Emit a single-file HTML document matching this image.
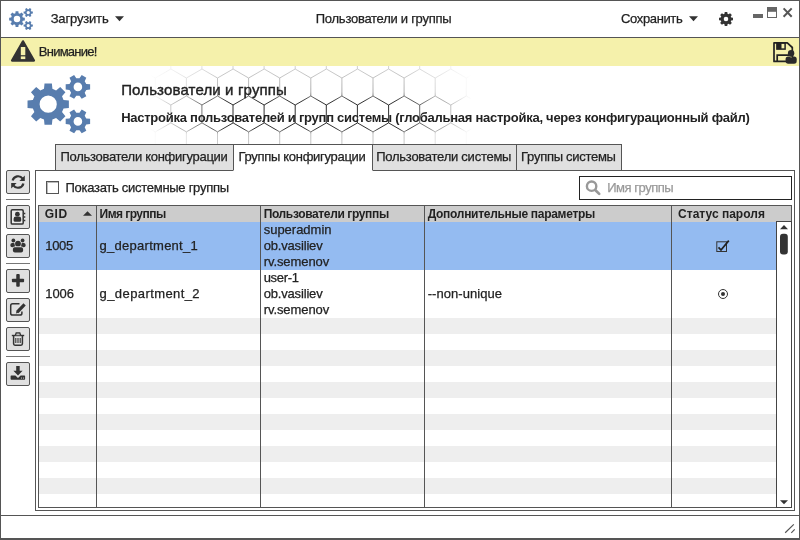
<!DOCTYPE html>
<html lang="ru">
<head>
<meta charset="utf-8">
<title>Пользователи и группы</title>
<style>
html,body{margin:0;padding:0;}
body{width:800px;height:540px;position:relative;overflow:hidden;background:#fff;
 font-family:"Liberation Sans",sans-serif;font-size:13px;color:#222;}
.a{position:absolute;}
.t{position:absolute;white-space:pre;will-change:opacity;opacity:0.999;line-height:16px;height:16px;color:#222;-webkit-text-stroke-width:0.25px;}
.ln{position:absolute;background:#555;}
.btn{position:absolute;left:6px;width:22px;height:22px;border:1px solid #555;border-radius:2px;background:#e0e0e0;}
.sep{position:absolute;left:6px;width:24px;height:1px;background:#777;}
.tab{position:absolute;top:144px;height:25px;border:1px solid #555;background:#e0e0e0;box-sizing:content-box;}
.stripe{position:absolute;left:39px;width:737px;height:16px;background:#eee;}
svg{position:absolute;overflow:visible;}
</style>
</head>
<body>
<!-- hex background -->
<svg width="800" height="540" viewBox="0 0 800 540" style="left:0;top:0;">
<defs>
<linearGradient id="hgx" gradientUnits="userSpaceOnUse" x1="140" y1="0" x2="480" y2="0"><stop offset="0.029" stop-color="#fff" stop-opacity="0"/><stop offset="0.162" stop-color="#fff" stop-opacity="0.55"/><stop offset="0.250" stop-color="#fff" stop-opacity="1"/><stop offset="0.765" stop-color="#fff" stop-opacity="1"/><stop offset="0.882" stop-color="#fff" stop-opacity="0.45"/><stop offset="0.976" stop-color="#fff" stop-opacity="0"/></linearGradient>
<linearGradient id="hgy" gradientUnits="userSpaceOnUse" x1="0" y1="60" x2="0" y2="175"><stop offset="0.052" stop-color="#fff" stop-opacity="0.22"/><stop offset="0.278" stop-color="#fff" stop-opacity="0.4"/><stop offset="0.357" stop-color="#fff" stop-opacity="1"/><stop offset="0.600" stop-color="#fff" stop-opacity="1"/><stop offset="0.643" stop-color="#fff" stop-opacity="0.3"/><stop offset="0.957" stop-color="#fff" stop-opacity="0.22"/></linearGradient>
<mask id="hmx" maskUnits="userSpaceOnUse" x="140" y="60" width="340" height="115"><rect x="140" y="60" width="340" height="115" fill="url(#hgx)"/></mask>
<mask id="hmy" maskUnits="userSpaceOnUse" x="140" y="60" width="340" height="115"><rect x="140" y="60" width="340" height="115" fill="url(#hgy)"/></mask>
<clipPath id="hc"><rect x="140" y="66" width="340" height="104"/></clipPath>
</defs>
<g clip-path="url(#hc)"><g mask="url(#hmy)"><path d="M124.2,42.1L124.2,24.2L139.8,15.2L155.3,24.2 M155.3,42.1L155.3,24.2L170.9,15.2L186.4,24.2 M186.4,42.1L186.4,24.2L202.0,15.2L217.5,24.2 M217.5,42.1L217.5,24.2L233.1,15.2L248.6,24.2 M248.6,42.1L248.6,24.2L264.2,15.2L279.7,24.2 M279.7,42.1L279.7,24.2L295.2,15.2L310.8,24.2 M310.8,42.1L310.8,24.2L326.4,15.2L341.9,24.2 M341.9,42.1L341.9,24.2L357.5,15.2L373.0,24.2 M373.0,42.1L373.0,24.2L388.6,15.2L404.1,24.2 M404.1,42.1L404.1,24.2L419.7,15.2L435.2,24.2 M435.2,42.1L435.2,24.2L450.8,15.2L466.3,24.2 M466.3,42.1L466.3,24.2L481.9,15.2L497.4,24.2 M108.6,69.0L108.6,51.1L124.2,42.1L139.8,51.1 M139.8,69.0L139.8,51.1L155.3,42.1L170.9,51.1 M170.8,69.0L170.8,51.1L186.4,42.1L202.0,51.1 M201.9,69.0L201.9,51.1L217.5,42.1L233.1,51.1 M233.0,69.0L233.0,51.1L248.6,42.1L264.1,51.1 M264.1,69.0L264.1,51.1L279.7,42.1L295.2,51.1 M295.2,69.0L295.2,51.1L310.8,42.1L326.4,51.1 M326.3,69.0L326.3,51.1L341.9,42.1L357.4,51.1 M357.4,69.0L357.4,51.1L373.0,42.1L388.6,51.1 M388.6,69.0L388.6,51.1L404.1,42.1L419.7,51.1 M419.7,69.0L419.7,51.1L435.2,42.1L450.8,51.1 M450.8,69.0L450.8,51.1L466.3,42.1L481.9,51.1 M481.9,69.0L481.9,51.1L497.4,42.1L513.0,51.1 M124.2,96.0L124.2,78.0L139.8,69.0L155.3,78.0 M155.3,96.0L155.3,78.0L170.9,69.0L186.4,78.0 M186.4,96.0L186.4,78.0L202.0,69.0L217.5,78.0 M217.5,96.0L217.5,78.0L233.1,69.0L248.6,78.0 M248.6,96.0L248.6,78.0L264.2,69.0L279.7,78.0 M279.7,96.0L279.7,78.0L295.2,69.0L310.8,78.0 M310.8,96.0L310.8,78.0L326.4,69.0L341.9,78.0 M341.9,96.0L341.9,78.0L357.5,69.0L373.0,78.0 M373.0,96.0L373.0,78.0L388.6,69.0L404.1,78.0 M404.1,96.0L404.1,78.0L419.7,69.0L435.2,78.0 M435.2,96.0L435.2,78.0L450.8,69.0L466.3,78.0 M466.3,96.0L466.3,78.0L481.9,69.0L497.4,78.0 M108.6,122.9L108.6,105.0L124.2,96.0L139.8,105.0 M139.8,122.9L139.8,105.0L155.3,96.0L170.9,105.0 M170.8,122.9L170.8,105.0L186.4,96.0L202.0,105.0 M201.9,122.9L201.9,105.0L217.5,96.0L233.1,105.0 M233.0,122.9L233.0,105.0L248.6,96.0L264.1,105.0 M264.1,122.9L264.1,105.0L279.7,96.0L295.2,105.0 M295.2,122.9L295.2,105.0L310.8,96.0L326.4,105.0 M326.3,122.9L326.3,105.0L341.9,96.0L357.4,105.0 M357.4,122.9L357.4,105.0L373.0,96.0L388.6,105.0 M388.6,122.9L388.6,105.0L404.1,96.0L419.7,105.0 M419.7,122.9L419.7,105.0L435.2,96.0L450.8,105.0 M450.8,122.9L450.8,105.0L466.3,96.0L481.9,105.0 M481.9,122.9L481.9,105.0L497.4,96.0L513.0,105.0 M124.2,149.8L124.2,131.9L139.8,122.9L155.3,131.9 M155.3,149.8L155.3,131.9L170.9,122.9L186.4,131.9 M186.4,149.8L186.4,131.9L202.0,122.9L217.5,131.9 M217.5,149.8L217.5,131.9L233.1,122.9L248.6,131.9 M248.6,149.8L248.6,131.9L264.2,122.9L279.7,131.9 M279.7,149.8L279.7,131.9L295.2,122.9L310.8,131.9 M310.8,149.8L310.8,131.9L326.4,122.9L341.9,131.9 M341.9,149.8L341.9,131.9L357.5,122.9L373.0,131.9 M373.0,149.8L373.0,131.9L388.6,122.9L404.1,131.9 M404.1,149.8L404.1,131.9L419.7,122.9L435.2,131.9 M435.2,149.8L435.2,131.9L450.8,122.9L466.3,131.9 M466.3,149.8L466.3,131.9L481.9,122.9L497.4,131.9 M108.6,176.8L108.6,158.8L124.2,149.8L139.8,158.8 M139.8,176.8L139.8,158.8L155.3,149.8L170.9,158.8 M170.8,176.8L170.8,158.8L186.4,149.8L202.0,158.8 M201.9,176.8L201.9,158.8L217.5,149.8L233.1,158.8 M233.0,176.8L233.0,158.8L248.6,149.8L264.1,158.8 M264.1,176.8L264.1,158.8L279.7,149.8L295.2,158.8 M295.2,176.8L295.2,158.8L310.8,149.8L326.4,158.8 M326.3,176.8L326.3,158.8L341.9,149.8L357.4,158.8 M357.4,176.8L357.4,158.8L373.0,149.8L388.6,158.8 M388.6,176.8L388.6,158.8L404.1,149.8L419.7,158.8 M419.7,176.8L419.7,158.8L435.2,149.8L450.8,158.8 M450.8,176.8L450.8,158.8L466.3,149.8L481.9,158.8 M481.9,176.8L481.9,158.8L497.4,149.8L513.0,158.8" fill="none" stroke="#1a1a1a" stroke-width="0.9" mask="url(#hmx)"/></g></g>
</svg>
<!-- title bar -->
<div class="ln" style="left:0;top:37px;width:800px;height:1px;"></div>
<!-- warning bar -->
<div class="a" style="left:1px;top:38px;width:798px;height:28px;background:#f5f1ab;"></div>

<!-- tabs -->
<div class="a" style="left:35px;top:170px;width:758px;height:339px;border:1px solid #555;background:#fff;"></div>
<div class="tab" style="left:55px;width:178px;"></div>
<div class="tab" style="left:371px;width:145px;"></div>
<div class="tab" style="left:516px;width:104px;"></div>
<div class="tab" style="left:233px;width:138px;background:#fff;border-bottom-color:#fff;"></div>

<!-- checkbox -->
<div class="a" style="left:46px;top:181px;width:11px;height:11px;border:1px solid #555;background:#fff;box-shadow:inset 1px 1px 0 #bbb;"></div>
<!-- search box -->
<div class="a" style="left:579px;top:176px;width:211px;height:22px;border:1px solid #222;background:#fff;"></div>

<!-- table -->
<div class="a" style="left:38px;top:205px;width:752px;height:301px;border:1px solid #555;background:#fff;"></div>
<div class="a" style="left:39px;top:206px;width:752px;height:16px;background:#ccc;"></div>
<div class="a" style="left:39px;top:222px;width:737px;height:48px;background:#94bbf1;"></div>
<div class="stripe" style="top:318px;"></div>
<div class="stripe" style="top:350px;"></div>
<div class="stripe" style="top:382px;"></div>
<div class="stripe" style="top:414px;"></div>
<div class="stripe" style="top:446px;"></div>
<div class="stripe" style="top:478px;"></div>
<div class="ln" style="left:96px;top:206px;width:1px;height:301px;"></div>
<div class="ln" style="left:260px;top:206px;width:1px;height:301px;"></div>
<div class="ln" style="left:424px;top:206px;width:1px;height:301px;"></div>
<div class="ln" style="left:671px;top:206px;width:1px;height:301px;"></div>
<!-- scrollbar -->
<div class="a" style="left:776px;top:221px;width:14px;height:285px;border:1px solid #444;background:#fff;"></div>

<!-- status bar line -->
<div class="ln" style="left:0;top:515px;width:800px;height:1px;"></div>

<!-- toolbar buttons -->
<div class="btn" style="top:170px;"></div>
<div class="sep" style="top:199px;"></div>
<div class="btn" style="top:205px;"></div>
<div class="btn" style="top:234px;"></div>
<div class="sep" style="top:263px;"></div>
<div class="btn" style="top:269px;"></div>
<div class="btn" style="top:298px;"></div>
<div class="btn" style="top:327px;"></div>
<div class="sep" style="top:356px;"></div>
<div class="btn" style="top:362px;"></div>

<span class="t" style="left:50.70px;top:11px;font-size:13px;letter-spacing:-0.173px;">Загрузить</span>
<span class="t" style="left:315.80px;top:11px;font-size:13px;letter-spacing:-0.266px;">Пользователи и группы</span>
<span class="t" style="left:621.10px;top:11px;font-size:13px;letter-spacing:-0.379px;">Сохранить</span>
<span class="t" style="left:38.80px;top:44px;font-size:13px;letter-spacing:-0.751px;">Внимание!</span>
<span class="t" style="left:121.20px;top:82px;font-size:15px;letter-spacing:0.143px;-webkit-text-stroke-width:0.4px;">Пользователи и группы</span>
<span class="t" style="left:121.20px;top:110px;font-size:13px;letter-spacing:-0.257px;font-weight:700;-webkit-text-stroke-width:0;">Настройка пользователей и групп системы (глобальная настройка, через конфигурационный файл)</span>
<span class="t" style="left:60.45px;top:149px;font-size:13px;letter-spacing:-0.284px;">Пользователи конфигурации</span>
<span class="t" style="left:238.40px;top:149px;font-size:13px;letter-spacing:-0.292px;">Группы конфигурации</span>
<span class="t" style="left:376.20px;top:149px;font-size:13px;letter-spacing:-0.252px;">Пользователи системы</span>
<span class="t" style="left:521.10px;top:149px;font-size:13px;letter-spacing:-0.287px;">Группы системы</span>
<span class="t" style="left:65.45px;top:180px;font-size:13px;letter-spacing:-0.277px;">Показать системные группы</span>
<span class="t" style="left:607.20px;top:180px;font-size:13px;letter-spacing:-0.469px;color:#999;">Имя группы</span>
<span class="t" style="left:44.80px;top:206px;font-size:12px;letter-spacing:0.485px;font-weight:700;-webkit-text-stroke-width:0;">GID</span>
<span class="t" style="left:99.60px;top:206px;font-size:12px;letter-spacing:-0.544px;font-weight:700;-webkit-text-stroke-width:0;">Имя группы</span>
<span class="t" style="left:263.70px;top:206px;font-size:12px;letter-spacing:-0.365px;font-weight:700;-webkit-text-stroke-width:0;">Пользователи группы</span>
<span class="t" style="left:427.70px;top:206px;font-size:12px;letter-spacing:-0.295px;font-weight:700;-webkit-text-stroke-width:0;">Дополнительные параметры</span>
<span class="t" style="left:678.10px;top:206px;font-size:12px;letter-spacing:0.009px;font-weight:700;-webkit-text-stroke-width:0;">Статус пароля</span>
<span class="t" style="left:45.20px;top:238px;font-size:13px;letter-spacing:-0.280px;">1005</span>
<span class="t" style="left:99.60px;top:238px;font-size:13px;letter-spacing:0.265px;">g_department_1</span>
<span class="t" style="left:263.70px;top:222px;font-size:13px;letter-spacing:-0.014px;">superadmin</span>
<span class="t" style="left:263.70px;top:238px;font-size:13px;letter-spacing:-0.173px;">ob.vasiliev</span>
<span class="t" style="left:263.70px;top:254px;font-size:13px;letter-spacing:-0.073px;">rv.semenov</span>
<span class="t" style="left:45.20px;top:286px;font-size:13px;letter-spacing:-0.030px;">1006</span>
<span class="t" style="left:99.60px;top:286px;font-size:13px;letter-spacing:0.408px;">g_department_2</span>
<span class="t" style="left:263.70px;top:270px;font-size:13px;letter-spacing:-0.293px;">user-1</span>
<span class="t" style="left:263.70px;top:286px;font-size:13px;letter-spacing:-0.173px;">ob.vasiliev</span>
<span class="t" style="left:263.70px;top:302px;font-size:13px;letter-spacing:-0.073px;">rv.semenov</span>
<span class="t" style="left:427.70px;top:286px;font-size:13px;letter-spacing:0.057px;">--non-unique</span>

<svg width="800" height="540" viewBox="0 0 800 540" style="left:0;top:0;">
<defs><path id="cogs" fill-rule="evenodd" d="M63.54,100.00 L68.87,100.51 L68.87,107.89 L63.54,108.40 L62.01,112.08 L65.43,116.21 L60.21,121.43 L56.08,118.01 L52.40,119.54 L51.89,124.87 L44.51,124.87 L44.00,119.54 L40.32,118.01 L36.19,121.43 L30.97,116.21 L34.39,112.08 L32.86,108.40 L27.53,107.89 L27.53,100.51 L32.86,100.00 L34.39,96.32 L30.97,92.19 L36.19,86.97 L40.32,90.39 L44.00,88.86 L44.51,83.53 L51.89,83.53 L52.40,88.86 L56.08,90.39 L60.21,86.97 L65.43,92.19 L62.01,96.32Z M56.80,104.20 A8.6,8.6 0 1,0 39.60,104.20 A8.6,8.6 0 1,0 56.80,104.20Z M86.27,83.89 L90.11,84.24 L90.11,89.56 L86.27,89.91 L84.70,92.64 L86.31,96.15 L81.70,98.81 L79.48,95.66 L76.32,95.66 L74.10,98.81 L69.49,96.15 L71.10,92.64 L69.53,89.91 L65.69,89.56 L65.69,84.24 L69.53,83.89 L71.10,81.16 L69.49,77.65 L74.10,74.99 L76.32,78.14 L79.48,78.14 L81.70,74.99 L86.31,77.65 L84.70,81.16Z M82.20,86.90 A4.3,4.3 0 1,0 73.60,86.90 A4.3,4.3 0 1,0 82.20,86.90Z M86.27,118.39 L90.11,118.74 L90.11,124.06 L86.27,124.41 L84.70,127.14 L86.31,130.65 L81.70,133.31 L79.48,130.16 L76.32,130.16 L74.10,133.31 L69.49,130.65 L71.10,127.14 L69.53,124.41 L65.69,124.06 L65.69,118.74 L69.53,118.39 L71.10,115.66 L69.49,112.15 L74.10,109.49 L76.32,112.64 L79.48,112.64 L81.70,109.49 L86.31,112.15 L84.70,115.66Z M82.20,121.40 A4.3,4.3 0 1,0 73.60,121.40 A4.3,4.3 0 1,0 82.20,121.40Z"/></defs>
<use href="#cogs" fill="#587dae"/>
<use href="#cogs" fill="#587dae" transform="translate(-1.26,-20.35) scale(0.3785)"/>
<path d="M115,16.3 L124,16.3 L119.5,21.2Z" fill="#333"/>
<path d="M689,16.3 L698,16.3 L693.5,21.2Z" fill="#333"/>
<path fill-rule="evenodd" fill="#333" d="M731.19,17.49 L732.98,17.72 L732.98,20.28 L731.19,20.51 L730.73,21.60 L731.84,23.04 L730.04,24.84 L728.60,23.73 L727.51,24.19 L727.28,25.98 L724.72,25.98 L724.49,24.19 L723.40,23.73 L721.96,24.84 L720.16,23.04 L721.27,21.60 L720.81,20.51 L719.02,20.28 L719.02,17.72 L720.81,17.49 L721.27,16.40 L720.16,14.96 L721.96,13.16 L723.40,14.27 L724.49,13.81 L724.72,12.02 L727.28,12.02 L727.51,13.81 L728.60,14.27 L730.04,13.16 L731.84,14.96 L730.73,16.40Z M728.30,19.00 A2.3,2.3 0 1,0 723.70,19.00 A2.3,2.3 0 1,0 728.30,19.00Z"/>
<rect x="753" y="14" width="10" height="4" fill="#666"/>
<rect x="767.5" y="7.5" width="9" height="10" fill="#fff" stroke="#666" stroke-width="1"/><rect x="767" y="7" width="10" height="4.8" fill="#666"/>
<path d="M783.6,8.4 L791.7,16.7 M791.7,8.4 L783.6,16.7" stroke="#555" stroke-width="2" fill="none"/>
<path d="M23,41.3 L34,60.6 L12,60.6Z" fill="#333" stroke="#333" stroke-width="2.2" stroke-linejoin="round"/>
<rect x="20.8" y="47" width="4.5" height="8.2" fill="#f5f1ab"/><rect x="20.8" y="56.4" width="4.5" height="2.7" fill="#f5f1ab"/>
<path d="M774,42.9 L787.3,42.9 L792.3,47.5 L792.3,61.4 L774,61.4Z" fill="none" stroke="#222" stroke-width="1.7" stroke-linejoin="round"/>
<rect x="776.9" y="42.9" width="8.2" height="6.2" fill="none" stroke="#222" stroke-width="1.5"/><rect x="776.9" y="42.9" width="4.6" height="6.2" fill="#222"/>
<path d="M777.2,61.4 L777.2,55.2 L789,55.2" fill="none" stroke="#222" stroke-width="1.7"/>
<ellipse cx="791.1" cy="53.3" rx="3.2" ry="3.3" fill="#2a2a2a"/>
<rect x="785.6" y="56.6" width="11.1" height="7.1" rx="2.6" fill="#2a2a2a"/><rect x="790.3" y="56.9" width="1.6" height="1" fill="#77744f"/>
<circle cx="591.6" cy="186.2" r="4.7" fill="none" stroke="#999" stroke-width="2.4"/><path d="M595.2,190 L599.2,193.9" stroke="#999" stroke-width="2.7" stroke-linecap="round"/>
<path d="M83,215.7 L92,215.7 L87.5,211.2Z" fill="#333"/>
<path d="M780,229.2 L788,229.2 L784,225Z" fill="#333"/>
<path d="M780,500.2 L788,500.2 L784,504.3Z" fill="#333"/>
<rect x="780" y="233.8" width="7.8" height="20.6" rx="3" fill="#333"/>
<rect x="716.8" y="241.8" width="9.7" height="9.7" fill="none" stroke="#333" stroke-width="1"/><path d="M718.5,247.3 L721,250 L728.8,240.6" fill="none" stroke="#222" stroke-width="1.7"/>
<circle cx="723" cy="294" r="4.5" fill="#fff" stroke="#333" stroke-width="1"/><circle cx="723" cy="294" r="2" fill="#333"/>
<path d="M785.2,532.8 L793.8,524.4 M791.3,532.8 L794.7,529.4" stroke="#555" stroke-width="1.2" fill="none"/>
<g fill="none" stroke="#333" stroke-width="2.2"><path d="M12.6,180.6 A5.6,5.6 0 0 1 22.6,178.6"/><path d="M23.4,183.4 A5.6,5.6 0 0 1 13.4,185.4"/></g>
<path d="M24.8,175.6 L24.8,181 L19.4,181Z" fill="#333"/><path d="M11.2,188.4 L11.2,183 L16.6,183Z" fill="#333"/>
<rect x="11.2" y="209.7" width="12" height="14.4" rx="1.2" fill="#eaeaea" stroke="#333" stroke-width="1.5"/>
<path d="M24,213.5 h1.3 M24,217 h1.3 M24,220.5 h1.3" stroke="#333" stroke-width="1.6"/>
<circle cx="17.4" cy="214.2" r="2.4" fill="#333"/><path d="M13.6,220.6 L13.6,218.8 Q13.6,216.4 16,216.4 L18.8,216.4 Q21.2,216.4 21.2,218.8 L21.2,220.6 Q21.2,221.7 20.1,221.7 L14.7,221.7 Q13.6,221.7 13.6,220.6Z" fill="#333"/>
<circle cx="13.4" cy="240.5" r="1.9" fill="#333"/><circle cx="22.6" cy="240.5" r="1.9" fill="#333"/>
<rect x="10.4" y="242.9" width="5" height="4.4" rx="1.8" fill="#333"/><rect x="20.6" y="242.9" width="5" height="4.4" rx="1.8" fill="#333"/>
<circle cx="18" cy="243.7" r="3.5" fill="#e0e0e0"/><circle cx="18" cy="243.7" r="2.9" fill="#333"/>
<path d="M12.4,248.6 Q12.4,246.4 14.4,246.4 L21.6,246.4 Q23.6,246.4 23.6,248.6 L23.6,250.6 Q23.6,252.8 21.4,252.8 L14.6,252.8 Q12.4,252.8 12.4,250.6Z" fill="#e0e0e0"/>
<path d="M12.9,249 Q12.9,247.2 14.7,247.2 L21.3,247.2 Q23.1,247.2 23.1,249 L23.1,250.6 Q23.1,252.6 21.1,252.6 L14.9,252.6 Q12.9,252.6 12.9,250.6Z" fill="#333"/>
<rect x="11.9" y="278.7" width="12.2" height="3.5" rx="0.9" fill="#333"/><rect x="16.25" y="274.1" width="3.5" height="12.6" rx="0.9" fill="#333"/>
<path d="M19.5,303.8 L12.6,303.8 Q10.7,303.8 10.7,305.7 L10.7,313.2 Q10.7,315.1 12.6,315.1 L20,315.1 Q21.9,315.1 21.9,313.2 L21.9,311.6" fill="none" stroke="#333" stroke-width="1.5"/>
<path d="M17.2,312.2 L24.6,304.4" stroke="#333" stroke-width="3.2" fill="none"/><path d="M15.9,313.6 L16.6,311 L18.4,312.8Z" fill="#333"/>
<path d="M11.8,335.5 L24.2,335.5" stroke="#333" stroke-width="1.4"/><path d="M15.4,335.3 L16.2,332.9 L19.8,332.9 L20.6,335.3" fill="#bbb" stroke="#333" stroke-width="1.3"/>
<path d="M13.6,335.8 L13.6,343.8 Q13.6,345.2 15,345.2 L21,345.2 Q22.4,345.2 22.4,343.8 L22.4,335.8" fill="none" stroke="#333" stroke-width="1.5"/>
<path d="M15.8,338 V343 M18,338 V343 M20.2,338 V343" stroke="#333" stroke-width="1.1"/>
<path d="M16.2,366 L19.7,366 L19.7,370.8 L22.6,370.8 L18,375.6 L13.4,370.8 L16.2,370.8Z" fill="#333"/>
<path d="M11.3,375.4 L15.4,375.4 L18,378 L20.6,375.4 L24.4,375.4 Q25.1,375.4 25.1,376.1 L25.1,379 Q25.1,379.7 24.4,379.7 L11.3,379.7 Q10.6,379.7 10.6,379 L10.6,376.1 Q10.6,375.4 11.3,375.4Z" fill="#333"/>
<rect x="21" y="377.4" width="0.9" height="1.4" fill="#aaa"/><rect x="23" y="377.4" width="0.9" height="1.4" fill="#aaa"/>
</svg>

<!-- window border -->
<div class="a" style="left:0;top:0;width:798px;height:537px;border-style:solid;border-color:#555;border-width:1px 1px 2px 1px;pointer-events:none;"></div>
</body>
</html>
